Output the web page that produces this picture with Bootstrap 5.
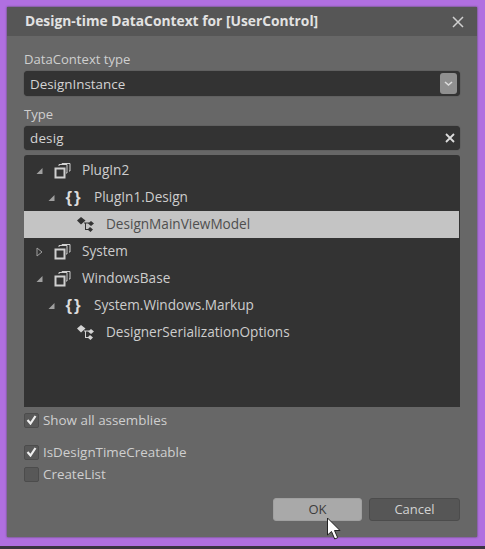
<!DOCTYPE html>
<html lang="en">
<head>
  <meta charset="UTF-8">
  <title>Design-time DataContext</title>
  <link href="https://cdn.jsdelivr.net/npm/bootstrap@5.3.3/dist/css/bootstrap.min.css" rel="stylesheet">
  <style>
    html, body { height: 100%; }
    body {
      background: #3a3440;
      font-family: "Open Sans", "Noto Sans", sans-serif;
      font-size: 13.4px;
      color: #cfcfcf;
      overflow: hidden;
    }
    .frame {
      width: 485px;
      height: 546px;
      background: #b06fe0;
      padding: 7px 8px 9px 7px;
    }
    .dlg {
      height: 100%;
      background: #676767;
      box-shadow: 0 0 2px #444;
    }
    .dlg-head {
      height: 29px;
      background: #565656;
      padding: 0 13px 0 18px;
      font-weight: 700;
      font-size: 13.8px;
      color: #e2e2e2;
    }
    .dlg-body { padding: 0 17px 0 17px; }
    .fld-label { height: 18px; line-height: 18px; margin-bottom: 3px; font-size: 13.1px; }
    .fld-label.first { margin-top: 14px; }
    .fld-label.second { margin-top: 9px; }
    .fld {
      background: #333;
      border-radius: 4px;
      padding: 0 3px 0 6px;
      color: #d4d4d4;
      box-shadow: 0 0 1px #2a2a2a;
    }
    .fld-select { height: 25px; padding-top: 1px; }
    .fld-input { height: 24px; padding-right: 5px; letter-spacing: .2px; }
    .drop-btn {
      width: 17px;
      height: 21px;
      margin-top: -1px;
      background: #8f8f8f;
      border-radius: 3px;
    }
    .tree {
      margin-top: 5px;
      height: 252px;
      background: #333;
      border-radius: 3px 3px 0 0;
      padding: 2px 1px 0 0;
      font-size: 13.6px;
    }
    .tree-row { height: 27px; color: #cdcdcd; }
    .tree-row.sel { background: #c4c4c4; color: #4f4f4f; }
    .lvl-0 { padding-left: 10px; }
    .lvl-1 { padding-left: 22px; }
    .lvl-2 { padding-left: 53px; }
    .arrow { width: 11px; flex: none; }
    .ico-asm { width: 17px; margin: 0 11px 0 9px; flex: none; }
    .ico-ns {
      width: 22px;
      margin: 0 9px 0 6px;
      flex: none;
      font-family: "Liberation Sans", sans-serif;
      font-size: 17px;
      font-weight: 700;
      letter-spacing: 2px;
      text-align: center;
      color: #dcdcdc;
      line-height: 1;
    }
    .ico-cls { width: 18px; margin-right: 11px; flex: none; }
    .chk-row { height: 22px; }
    .chk-first { margin-top: 2px; }
    .chk-gap { margin-top: 10px; }
    .chk-box {
      width: 15px;
      height: 15px;
      background: #585858;
      border: 1px solid #4c4c4c;
      border-radius: 2px;
      margin-right: 4px;
      flex: none;
    }
    .btn-line { margin-top: 13px; gap: 7px; }
    .act-btn {
      height: 23px;
      border-radius: 3px;
      font-size: 13px;
      line-height: 1;
      padding: 0;
      border: 1px solid #4c4c4c;
      background: #565656;
      color: #d2d2d2;
    }
    .act-ok { width: 89px; background: #a9a9a9; border-color: #a0a0a0; color: #3c3c3c; }
    .act-cancel { width: 91px; }
    .pointer { position: absolute; left: 326px; top: 517px; }
  </style>
</head>
<body>
<div class="frame">
  <div class="dlg">
    <div class="dlg-head d-flex align-items-center justify-content-between">
      <span>Design-time DataContext for [UserControl]</span>
      <svg width="12" height="12" viewBox="0 0 12 12"><path d="M1 1l10 10M11 1L1 11" stroke="#d0d0d0" stroke-width="1.5"/></svg>
    </div>
    <div class="dlg-body">
      <div class="fld-label first">DataContext type</div>
      <div class="fld fld-select d-flex align-items-center justify-content-between">
        <span>DesignInstance</span>
        <span class="drop-btn d-flex align-items-center justify-content-center">
          <svg width="9" height="6" viewBox="0 0 9 6"><path d="M1 1l3.500 3L8 1" fill="none" stroke="#dcdcdc" stroke-width="1.6"/></svg>
        </span>
      </div>
      <div class="fld-label second">Type</div>
      <div class="fld fld-input d-flex align-items-center justify-content-between">
        <span>desig</span>
        <svg width="10" height="10" viewBox="0 0 10 10"><path d="M1 1l8 8M9 1L1 9" stroke="#dcdcdc" stroke-width="1.8"/></svg>
      </div>

      <div class="tree">
        <div class="tree-row lvl-0 d-flex align-items-center">
          <svg class="arrow" height="8" viewBox="0 0 8 8"><path d="M7 1v6H1z" fill="#a0a0a0"/></svg>
          <svg class="ico-asm" height="16" viewBox="0 0 17 16"><use href="#asm"/></svg>
          <span>PlugIn2</span>
        </div>
        <div class="tree-row lvl-1 d-flex align-items-center">
          <svg class="arrow" height="8" viewBox="0 0 8 8"><path d="M7 1v6H1z" fill="#a0a0a0"/></svg>
          <span class="ico-ns">{}</span>
          <span>PlugIn1.Design</span>
        </div>
        <div class="tree-row sel lvl-2 d-flex align-items-center">
          <svg class="ico-cls" height="17" viewBox="0 0 18 17"><use href="#cls-dark"/></svg>
          <span>DesignMainViewModel</span>
        </div>
        <div class="tree-row lvl-0 d-flex align-items-center">
          <svg class="arrow" height="10" viewBox="0 0 8 10"><path d="M1.500 1l5 4-5 4z" fill="none" stroke="#a0a0a0"/></svg>
          <svg class="ico-asm" height="16" viewBox="0 0 17 16"><use href="#asm"/></svg>
          <span>System</span>
        </div>
        <div class="tree-row lvl-0 d-flex align-items-center">
          <svg class="arrow" height="8" viewBox="0 0 8 8"><path d="M7 1v6H1z" fill="#a0a0a0"/></svg>
          <svg class="ico-asm" height="16" viewBox="0 0 17 16"><use href="#asm"/></svg>
          <span>WindowsBase</span>
        </div>
        <div class="tree-row lvl-1 d-flex align-items-center">
          <svg class="arrow" height="8" viewBox="0 0 8 8"><path d="M7 1v6H1z" fill="#a0a0a0"/></svg>
          <span class="ico-ns">{}</span>
          <span>System.Windows.Markup</span>
        </div>
        <div class="tree-row lvl-2 d-flex align-items-center">
          <svg class="ico-cls" height="17" viewBox="0 0 18 17"><use href="#cls-light"/></svg>
          <span>DesignerSerializationOptions</span>
        </div>
      </div>

      <div class="chk-row chk-first d-flex align-items-center">
        <span class="chk-box d-flex align-items-center justify-content-center"><svg width="11" height="10" viewBox="0 0 11 10"><use href="#tick"/></svg></span>
        <span>Show all assemblies</span>
      </div>
      <div class="chk-row chk-gap d-flex align-items-center">
        <span class="chk-box d-flex align-items-center justify-content-center"><svg width="11" height="10" viewBox="0 0 11 10"><use href="#tick"/></svg></span>
        <span>IsDesignTimeCreatable</span>
      </div>
      <div class="chk-row d-flex align-items-center">
        <span class="chk-box"></span>
        <span>CreateList</span>
      </div>
      <div class="btn-line d-flex justify-content-end">
        <button type="button" class="btn act-btn act-ok">OK</button>
        <button type="button" class="btn act-btn act-cancel">Cancel</button>
      </div>
    </div>
  </div>
</div>

<svg class="pointer" width="16" height="24" viewBox="0 0 16 24">
  <path d="M1.500 1v17l4-3.500 3.200 7.500 3-1.300-3.200-7.200h5.500z" fill="#fff" stroke="#222"/>
</svg>

<svg width="0" height="0" class="position-absolute">
  <defs>
    <g id="asm" fill="none" stroke="#d0d0d0">
      <rect x="1.500" y="5.500" width="9" height="9" stroke-width="2"/>
      <path d="M5 3V1.500h8V10h-1M8 1V.5h8V8h-1" stroke-width="1"/>
    </g>
    <g id="cls-light" fill="#d4d4d4">
      <path d="M0 4.500L4 1l4.500 3.500L4 8.500z"/>
      <path d="M11 7.500L14 5l3 2.500-3 2.500zM10.500 13.500L13 11l3 2.500-2.500 2.500z"/>
      <path d="M7 6.500h5v1H9V13h3v1H8V7.500H7z"/>
    </g>
    <g id="cls-dark" fill="#333">
      <path d="M0 4.500L4 1l4.500 3.500L4 8.500z"/>
      <path d="M11 7.500L14 5l3 2.500-3 2.500zM10.500 13.500L13 11l3 2.500-2.500 2.500z"/>
      <path d="M7 6.500h5v1H9V13h3v1H8V7.500H7z"/>
    </g>
    <path id="tick" d="M1.500 5l3 3.500L9.500 1" fill="none" stroke="#eee" stroke-width="2.200"/>
  </defs>
</svg>
</body>
</html>
